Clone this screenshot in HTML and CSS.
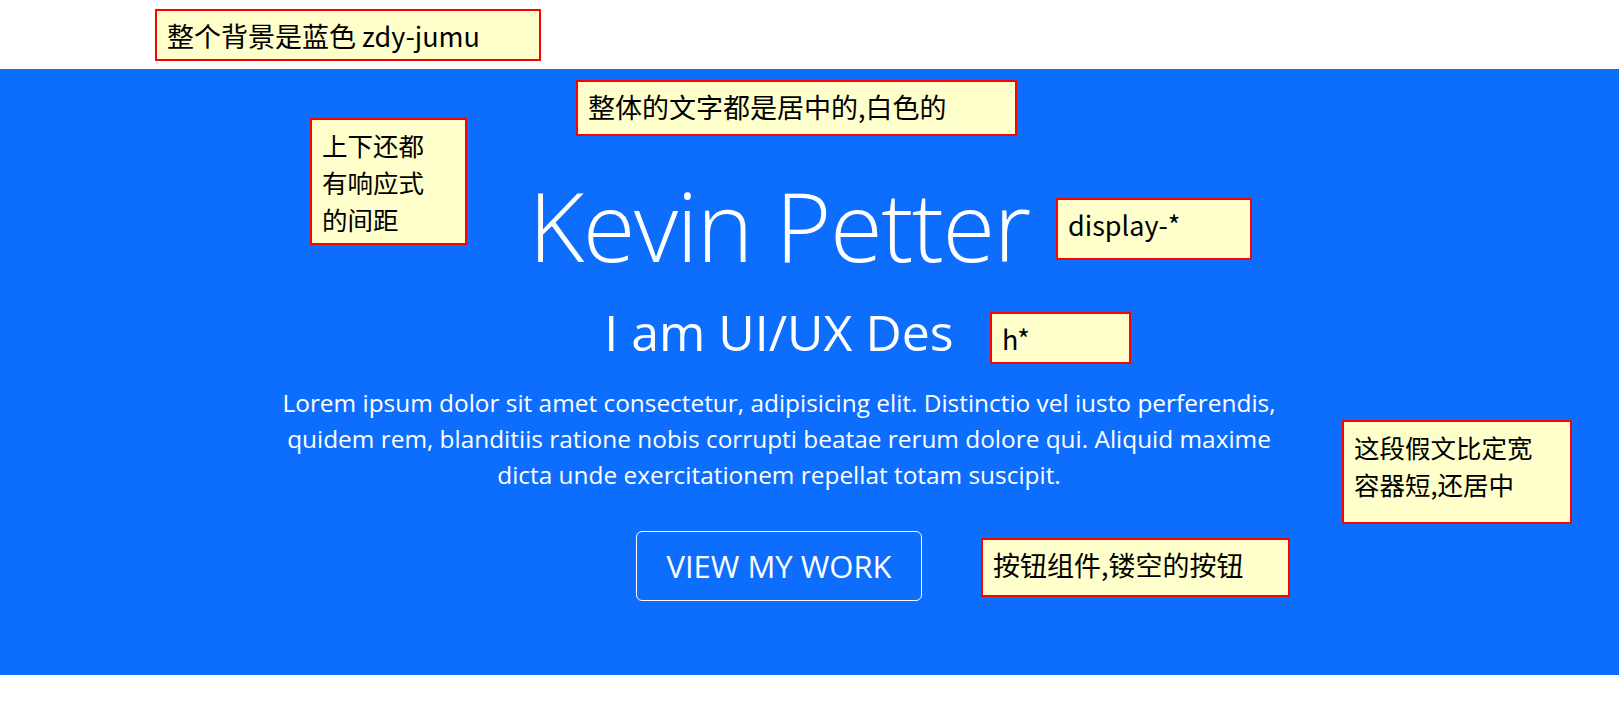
FILE: index.html
```html
<!DOCTYPE html>
<html lang="zh-CN">
<head>
<meta charset="utf-8">
<title>Kevin Petter</title>
<link rel="stylesheet" href="styles.css">
</head>
<body>
<div class="page">
  <div class="top-gap"></div>
  <section class="zdy-jumu">
    <h1 class="display-title">Kevin Petter</h1>
    <h2 class="subtitle">I am UI/UX Des</h2>
    <p class="intro">Lorem ipsum dolor sit amet consectetur, adipisicing elit. Distinctio vel iusto perferendis, quidem rem, blanditiis ratione nobis corrupti beatae rerum dolore qui. Aliquid maxime dicta unde exercitationem repellat totam suscipit.</p>
    <a class="btn-outline" href="#">VIEW MY WORK</a>
  </section>

  <div class="note note-bg">整个背景是蓝色 zdy-jumu</div>
  <div class="note note-center">整体的文字都是居中的,白色的</div>
  <div class="note note-multi note-space">上下还都<br>有响应式<br>的间距</div>
  <div class="note note-display">display-*</div>
  <div class="note note-h">h*</div>
  <div class="note note-multi note-lead">这段假文比定宽<br>容器短,还居中</div>
  <div class="note note-btn">按钮组件,镂空的按钮</div>
</div>
</body>
</html>
```
FILE: styles.css
```css
* { box-sizing: border-box; }
html, body { margin: 0; padding: 0; background: #fff; }
body {
  font-family: "Open Sans", "Noto Sans", "Noto Sans CJK SC", sans-serif;
  width: 1619px;
  height: 719px;
  overflow: hidden;
}
.page { position: relative; width: 1619px; height: 719px; }
.top-gap { height: 69px; }

.zdy-jumu {
  background: #0d6efd;
  color: #fff;
  text-align: center;
  height: 606px;
  padding: 96px 61px 0 0;
  display: flex;
  flex-direction: column;
  align-items: center;
}
.display-title {
  margin: 0;
  font-size: 96px;
  line-height: 120px;
  font-weight: 300;
  letter-spacing: -1.5px;
}
.subtitle {
  margin: 16px 0 0;
  font-size: 50px;
  line-height: 62px;
  font-weight: 400;
}
.intro {
  margin: 22px 0 0;
  max-width: 1030px;
  font-size: 24.4px;
  line-height: 36px;
}
.btn-outline {
  margin-top: 38px;
  display: inline-block;
  width: 286px;
  height: 70px;
  line-height: 68px;
  border: 1px solid #fff;
  border-radius: 6px;
  color: #fff;
  text-decoration: none;
  font-size: 31px;
}

.note {
  position: absolute;
  background: #ffffcc;
  border: 2px solid #ff0000;
  color: #000;
  font-family: "Noto Sans CJK SC", "Noto Sans", sans-serif;
  font-size: 27px;
  line-height: 35px;
  padding: 7px 10px;
  text-align: left;
  white-space: nowrap;
}
.note-multi {
  font-size: 25.5px;
  line-height: 37px;
  padding: 6px 10px;
}
.note-bg { left: 155px; top: 9px; width: 386px; height: 52px; }
.note-center { left: 576px; top: 80px; width: 441px; height: 56px; }
.note-space { left: 310px; top: 118px; width: 157px; height: 127px; }
.note-display { left: 1056px; top: 198px; width: 196px; height: 62px; }
.note-h { left: 990px; top: 312px; width: 141px; height: 52px; }
.note-lead { left: 1342px; top: 420px; width: 230px; height: 104px; }
.note-btn { left: 981px; top: 538px; width: 309px; height: 59px; }
```
